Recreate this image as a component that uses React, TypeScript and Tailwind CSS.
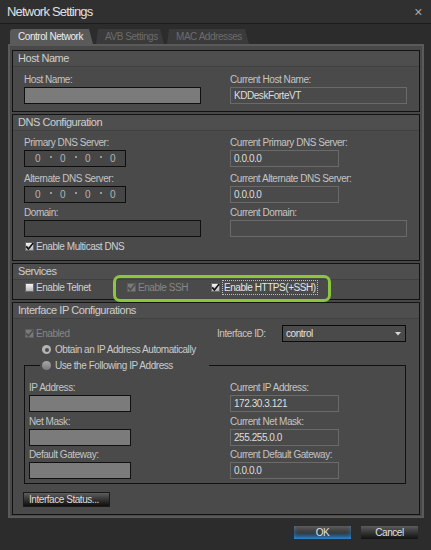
import React from "react";

type Kids = { children?: React.ReactNode };

function Section({ title, h, children, extra }: Kids & { title: string; h: string; extra?: React.ReactNode }) {
  return (
    <div className={"relative shrink-0 border border-[#131313] bg-[#4a4a4a] flex flex-col " + h}>
      <div className="h-[16px] shrink-0 flex items-center pl-[5px] bg-[#4e4e4e] border-b border-[#404040] text-[11px] text-[#cfcfcf]">
        {title}
      </div>
      {children}
      {extra}
    </div>
  );
}

function Field({ label, children }: Kids & { label: string }) {
  return (
    <div className="flex flex-col">
      <div className="h-[13px] leading-[13px] mb-[1px] text-[#c4c4c4] whitespace-nowrap">{label}</div>
      {children}
    </div>
  );
}

function EditBox({ w }: { w: string }) {
  return <div className={"h-[17px] bg-[#7b7b7b] border border-[#101010] " + w} />;
}

function DarkBox({ w }: { w: string }) {
  return <div className={"h-[17px] bg-[#444444] border border-[#101010] " + w} />;
}

function RoBox({ w, value }: { w: string; value?: string }) {
  return (
    <div className={"h-[17px] flex items-center pl-[3px] bg-[#4a4a4a] border border-[#6a6a6a] text-[#dedede] " + w}>
      {value}
    </div>
  );
}

function IpBox() {
  return (
    <div className="w-[102px] h-[17px] grid grid-cols-[25px_25px_25px_25px] items-center bg-[#464646] border border-[#0e0e0e] text-[#b4b4b4]">
      {[0, 1, 2, 3].map((i) => (
        <div key={i} className="relative flex justify-center">
          0
          {i < 3 && <span className="absolute right-[-2px] top-[5px] w-[2px] h-[2px] bg-[#9a9a9a]" />}
        </div>
      ))}
    </div>
  );
}

function Check({ label, checked, disabled, focus }: { label: string; checked?: boolean; disabled?: boolean; focus?: boolean }) {
  const box = disabled
    ? "w-[9px] h-[9px] shrink-0 flex items-center justify-center bg-[#7a7a7a] border border-[#5e5e5e]"
    : "w-[9px] h-[9px] shrink-0 flex items-center justify-center bg-linear-to-b from-[#f4f4f4] to-[#b8b8b8] border border-[#6a6a6a]";
  return (
    <div className="flex items-center gap-[2px] h-[13px] whitespace-nowrap">
      <span className={box}>
        {checked && (
          <svg width="9" height="9" viewBox="0 0 9 9" className="overflow-visible">
            <path
              d="M1.2 4.4 L3.4 6.9 L8.2 1"
              fill="none"
              stroke={disabled ? "#4e4e4e" : "#111"}
              strokeWidth="1.6"
            />
          </svg>
        )}
      </span>
      <span
        className={
          disabled
            ? "text-[#878787]"
            : focus
            ? "text-[#e4e4e4] border border-dotted border-[#bdbdbd] px-[1px] leading-[13px]"
            : "text-[#d0d0d0]"
        }
      >
        {label}
      </span>
    </div>
  );
}

function Radio({ label, selected }: { label: string; selected?: boolean }) {
  return (
    <div className="flex items-center gap-[4px] h-[13px] whitespace-nowrap">
      <span
        className={
          selected
            ? "w-[9px] h-[9px] rounded-full bg-[#b4b4b4] flex items-center justify-center"
            : "w-[9px] h-[9px] rounded-full bg-linear-to-b from-[#a8a8a8] to-[#7a7a7a]"
        }
      >
        {selected && <span className="w-[4px] h-[4px] rounded-full bg-[#4c4c4c]" />}
      </span>
      <span className="text-[#cacaca]">{label}</span>
    </div>
  );
}

export default function App() {
  return (
    <div className="w-[431px] h-[550px] bg-[#2c2c2c] flex flex-col overflow-hidden font-['Liberation_Sans',Arial,sans-serif] text-[10px] tracking-[-0.45px] text-[#c6c6c6] select-none">
      {/* title bar */}
      <div className="h-[24px] shrink-0 flex items-center justify-between pl-[7px] pr-[9px] bg-[#303030] border-b border-[#1c1c1c]">
        <span className="text-[13px] tracking-[-0.8px] text-[#e0e0e0]">Network Settings</span>
        <span className="text-[14px] leading-none text-[#a8a8a8]">×</span>
      </div>

      <div className="flex-1 flex flex-col pl-[8px] pt-[5px]">
        {/* tabs */}
        <div className="h-[15px] shrink-0 flex items-end pl-[2px] whitespace-nowrap">
          <div className="w-[83px] h-[15px] flex items-center pl-[8px] bg-[#5a5a5a] text-[#ececec] rounded-tl-[3px] [clip-path:polygon(0_0,calc(100%_-_4px)_0,100%_100%,0_100%)]">
            Control Network
          </div>
          <div className="ml-[3px] w-[68px] h-[15px] flex items-center pl-[9px] bg-[#3a3a3a] text-[#6c6c6c] [clip-path:polygon(2px_0,calc(100%_-_4px)_0,100%_100%,0_100%)]">
            AVB Settings
          </div>
          <div className="ml-[3px] w-[82px] h-[15px] flex items-center pl-[9px] bg-[#3a3a3a] text-[#6c6c6c] [clip-path:polygon(2px_0,calc(100%_-_4px)_0,100%_100%,0_100%)]">
            MAC Addresses
          </div>
        </div>

        {/* tab panel */}
        <div className="w-[416px] h-[474px] shrink-0 border-2 border-[#5a5a5a] bg-[#484848] px-[2px] pt-[4px] flex flex-col gap-[2px]">
          <Section title="Host Name" h="h-[62px]">
            <div className="grid grid-cols-[206px_1fr] pl-[11px] pt-[6px]">
              <Field label="Host Name:">
                <EditBox w="w-[177px]" />
              </Field>
              <Field label="Current Host Name:">
                <RoBox w="w-[177px]" value="KDDeskForteVT" />
              </Field>
            </div>
          </Section>

          <Section title="DNS Configuration" h="h-[147px]">
            <div className="flex flex-col pl-[11px] pt-[5px]">
              <div className="grid grid-cols-[206px_1fr]">
                <Field label="Primary DNS Server:">
                  <IpBox />
                </Field>
                <Field label="Current Primary DNS Server:">
                  <RoBox w="w-[109px]" value="0.0.0.0" />
                </Field>
              </div>
              <div className="grid grid-cols-[206px_1fr] mt-[5px]">
                <Field label="Alternate DNS Server:">
                  <IpBox />
                </Field>
                <Field label="Current Alternate DNS Server:">
                  <RoBox w="w-[109px]" value="0.0.0.0" />
                </Field>
              </div>
              <div className="grid grid-cols-[206px_1fr] mt-[3px]">
                <Field label="Domain:">
                  <DarkBox w="w-[177px]" />
                </Field>
                <Field label="Current Domain:">
                  <RoBox w="w-[177px]" />
                </Field>
              </div>
              <div className="mt-[3px] pl-[1px]">
                <Check checked label="Enable Multicast DNS" />
              </div>
            </div>
          </Section>

          <Section
            title="Services"
            h="h-[37px]"
            extra={
              <div className="absolute z-10 left-[100px] top-[11px] w-[218px] h-[27px] border-[3px] border-[#8cc63e] rounded-[7px] pointer-events-none" />
            }
          >
            <div className="flex items-center h-[14px] pl-[12px]">
              <div className="w-[102px]">
                <Check label="Enable Telnet" />
              </div>
              <div className="w-[84px]">
                <Check checked disabled label="Enable SSH" />
              </div>
              <Check checked focus label="Enable HTTPS(+SSH)" />
            </div>
          </Section>

          <Section title="Interface IP Configurations" h="h-[213px]">
            <div className="flex flex-col pl-[11px] pt-[6px]">
              <div className="flex items-center h-[17px]">
                <div className="w-[193px] pl-[1px]">
                  <Check checked disabled label="Enabled" />
                </div>
                <span className="w-[65px] whitespace-nowrap text-[#c6c6c6]">Interface ID:</span>
                <div className="w-[124px] h-[17px] flex items-center justify-between pl-[3px] pr-[4px] bg-[#4a4a4a] border border-[#0c0c0c] text-[#e2e2e2]">
                  control
                  <svg width="6" height="4" viewBox="0 0 6 4">
                    <polygon points="0,0 6,0 3,3.5" fill="#d8d8d8" />
                  </svg>
                </div>
              </div>
              <div className="mt-[1px] pl-[18px]">
                <Radio selected label="Obtain an IP Address Automatically" />
              </div>

              <div className="relative mt-[9px] w-[382px] h-[119px] border border-[#111111]">
                <div className="absolute left-[15px] top-[-7px] w-[169px] pl-[2px] bg-[#4a4a4a]">
                  <Radio label="Use the Following IP Address" />
                </div>
                <div className="flex flex-col pl-[4px] pt-[15px]">
                  <div className="grid grid-cols-[201px_1fr]">
                    <Field label="IP Address:">
                      <EditBox w="w-[102px]" />
                    </Field>
                    <Field label="Current IP Address:">
                      <RoBox w="w-[109px]" value="172.30.3.121" />
                    </Field>
                  </div>
                  <div className="grid grid-cols-[201px_1fr] mt-[3px]">
                    <Field label="Net Mask:">
                      <EditBox w="w-[102px]" />
                    </Field>
                    <Field label="Current Net Mask:">
                      <RoBox w="w-[109px]" value="255.255.0.0" />
                    </Field>
                  </div>
                  <div className="grid grid-cols-[201px_1fr] mt-[2px]">
                    <Field label="Default Gateway:">
                      <EditBox w="w-[102px]" />
                    </Field>
                    <Field label="Current Default Gateway:">
                      <RoBox w="w-[109px]" value="0.0.0.0" />
                    </Field>
                  </div>
                </div>
              </div>

              <div className="mt-[8px] ml-[-1px] w-[87px] h-[15px] flex items-center pl-[5px] bg-linear-to-b from-[#5e5e5e] to-[#0f0f0f] border border-[#1a1a1a] text-[#dcdcdc] whitespace-nowrap">
                Interface Status...
              </div>
            </div>
          </Section>
        </div>

        {/* dialog buttons */}
        <div className="w-[416px] flex justify-end gap-[10px] pr-[6px] mt-[8px]">
          <div className="w-[57px] h-[13px] flex items-center justify-center bg-linear-to-b from-[#5c5c5c] to-[#171717] shadow-[inset_0_-4px_5px_-1px_#2f8fe0] text-[#e0e0e0]">
            OK
          </div>
          <div className="w-[57px] h-[13px] flex items-center justify-center bg-linear-to-b from-[#5c5c5c] to-[#121212] text-[#e0e0e0]">
            Cancel
          </div>
        </div>
      </div>
    </div>
  );
}
